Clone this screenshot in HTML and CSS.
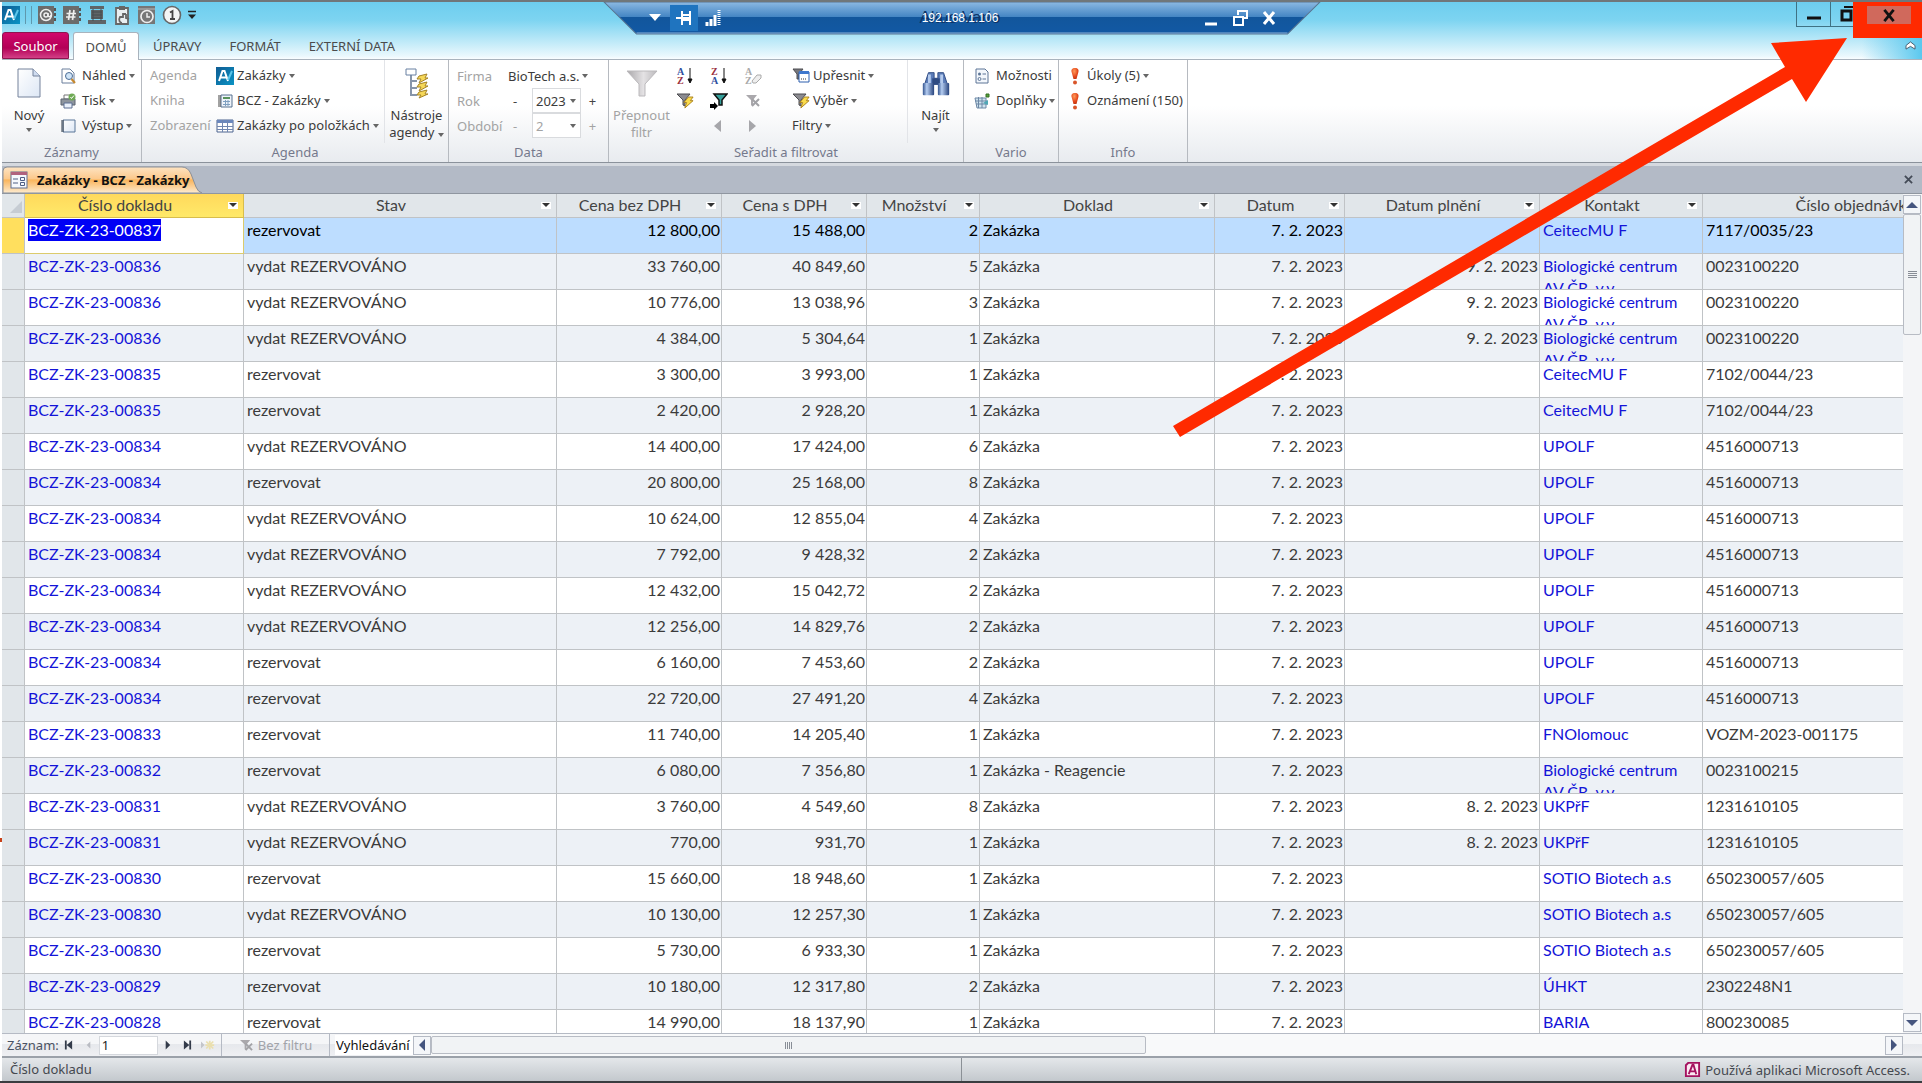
FILE: index.html
```html
<!DOCTYPE html>
<html lang="cs">

<head>
    <meta charset="UTF-8">
    <title>Altus Vario</title>
    <link rel="stylesheet" href="styles.css">
</head>

<body>

    <!-- shared icons -->
    <svg class="defs" aria-hidden="true">
        <defs>
            <linearGradient id="blueBox" x1="0" y1="0" x2="1" y2="1">
                <stop offset="0" stop-color="#0f5c93" />
                <stop offset="1" stop-color="#0a93c4" />
            </linearGradient>
            <linearGradient id="grayFunnel" x1="0" y1="0" x2="1" y2="0">
                <stop offset="0" stop-color="#a9a7aa" />
                <stop offset=".55" stop-color="#e4e2e4" />
                <stop offset="1" stop-color="#bbb9bc" />
            </linearGradient>
            <linearGradient id="bino" x1="0" y1="0" x2="1" y2="0">
                <stop offset="0" stop-color="#33548f" />
                <stop offset=".35" stop-color="#b5cdf1" />
                <stop offset="1" stop-color="#26427c" />
            </linearGradient>
            <linearGradient id="page" x1="0" y1="0" x2="1" y2="1">
                <stop offset="0" stop-color="#ffffff" />
                <stop offset="1" stop-color="#dde7f5" />
            </linearGradient>
            <radialGradient id="alert" cx=".4" cy=".3" r=".8">
                <stop offset="0" stop-color="#ff9a5a" />
                <stop offset=".6" stop-color="#e4471b" />
                <stop offset="1" stop-color="#b52f0c" />
            </radialGradient>
            <symbol id="bolt" viewBox="0 0 12 14">
                <path d="M6 1h5L8 5h3L2 13l2-6H1z" fill="#fbdc4c" stroke="#a8801a" stroke-width="1" />
            </symbol>
            <symbol id="av" viewBox="0 0 18 18">
                <rect width="18" height="18" fill="url(#blueBox)" />
                <path d="M3 14 6.500 4h2L12 14M4.500 10.500h6" fill="none" stroke="#fff" stroke-width="2" />
                <path d="M12 13 16 4" stroke="#5cc6ea" stroke-width="2" />
            </symbol>
            <symbol id="exclaim" viewBox="0 0 8 18">
                <path d="M4 1C1 1 0 3 .6 5L2.500 12h3l1.900-7C8 3 7 1 4 1z" fill="url(#alert)" />
                <circle cx="4" cy="15.500" r="2" fill="#d9552a" />
            </symbol>
            <symbol id="nofilter" viewBox="0 0 16 14">
                <path d="M1 1h11L8 6v6L6 11V6z" fill="#aaa8ac" />
                <path d="M7 5l7 7M14 5l-7 7" stroke="#a2a2a6" stroke-width="2" />
            </symbol>
        </defs>
    </svg>

    <header class="titlebar">
        <div class="quick">
            <svg class="logo" viewBox="0 0 18 18"><use href="#av" /></svg>
            <span class="sep"></span><span class="sep"></span>
            <button title="Kontakty"><svg viewBox="0 0 20 20"><rect x="1" y="1" width="16" height="18" fill="#6b6b6b" /><path d="M17 3h2v3h-2zM17 8h2v3h-2zM17 13h2v3h-2z" fill="#555" /><circle cx="9" cy="10" r="5.500" fill="none" stroke="#eee" stroke-width="1.500" /><circle cx="9" cy="10" r="2" fill="none" stroke="#eee" stroke-width="1.500" /><path d="M11 8v3q2 2 3-1" fill="none" stroke="#eee" stroke-width="1.500" /></svg></button>
            <button title="Čísla"><svg viewBox="0 0 20 20"><rect x="1" y="1" width="16" height="18" fill="#6b6b6b" /><path d="M17 3h2v3h-2zM17 8h2v3h-2zM17 13h2v3h-2z" fill="#555" /><path d="M8 5 6.500 15M12 5l-1.500 10M4.500 8.500H14M4 12h9.500" stroke="#eee" stroke-width="1.700" /></svg></button>
            <button title="Sklad"><svg viewBox="0 0 20 20"><path d="M3 1h14v3H3zM4 5h12v9H4zM1 15h18v4H1z" fill="#5f6467" /><path d="M5 7h10M5 10h10M5 13h10M6 4v12M14 4v12" stroke="#474c50" /></svg></button>
            <button title="Schránka"><svg viewBox="0 0 20 20"><path d="M4 3h12v16H4z" fill="#e9eef0" stroke="#666" stroke-width="1.800" /><path d="M7 1h6v4H7z" fill="#666" /><path d="M14 9h-3v3H8c-2 3 0 6 2 6M14 9v4l3 1" fill="none" stroke="#666" stroke-width="1.800" /></svg></button>
            <button title="Plán"><svg viewBox="0 0 20 20"><rect x="1" y="1" width="17" height="18" fill="#767676" /><path d="M1 4h17" stroke="#bbb" /><circle cx="10" cy="11.500" r="6" fill="#777" stroke="#eee" stroke-width="1.700" /><path d="M10 8v4h3" fill="none" stroke="#eee" stroke-width="1.500" /></svg></button>
            <button title="Jedna"><svg viewBox="0 0 20 20"><circle cx="10" cy="10" r="8.500" fill="#f3f5f5" stroke="#666" stroke-width="1.600" /><path d="M8 7.500 10.500 6v8M8 14h5" fill="none" stroke="#444" stroke-width="1.800" /></svg></button>
            <button class="more" title="Přizpůsobit"><svg viewBox="0 0 10 10"><path d="M1 1.500h8" stroke="#222" stroke-width="1.500" /><path d="M1 4.500h8L5 9z" fill="#222" /></svg></button>
        </div>

        <div class="window-buttons">
            <button title="Minimalizovat"><svg viewBox="0 0 16 16"><path d="M1 12h14" stroke="#111" stroke-width="3" /></svg></button>
            <button title="Obnovit"><svg viewBox="0 0 16 16"><path d="M2 5h9v9H2z" fill="none" stroke="#111" stroke-width="3" /><path d="M4 1h11v11" fill="none" stroke="#111" stroke-width="2" /></svg></button>
        </div>

        <div class="remote">
            <svg class="remote-shape" viewBox="0 0 686 34" preserveAspectRatio="none">
                <defs>
                    <linearGradient id="remoteBlue" x1="0" y1="0" x2="0" y2="1">
                        <stop offset="0" stop-color="#8cb9e2" />
                        <stop offset=".47" stop-color="#4385c3" />
                        <stop offset=".48" stop-color="#12569c" />
                        <stop offset="1" stop-color="#1259a4" />
                    </linearGradient>
                </defs>
                <path d="M1 0h684l-31 32H32z" fill="url(#remoteBlue)" stroke="#5a7590" />
                <path d="M32 31h622" stroke="#8db3d8" />
            </svg>
            <button title="Nabídka"><svg viewBox="0 0 20 20"><path d="M4 6h12l-6 7z" fill="#fff" /></svg></button>
            <button class="pin" title="Připnout"><svg viewBox="0 0 20 20"><path d="M2 10h6M8 3v14M16 3v14M8 7h8M8 12h8" fill="none" stroke="#fff" stroke-width="2" /><path d="M9 9h6v3H9z" fill="#fff" /></svg></button>
            <svg class="signal" viewBox="0 0 20 20"><path d="M4 14v4M8 11v7M12 7v11" stroke="#fff" stroke-width="3" /><path d="M16 2v16" stroke="#fff" stroke-width="3" stroke-dasharray="1 1" /></svg>
            <span class="address"><span class="ghost">Altus Vario</span><span>192.168.1.106</span></span>
            <button title="Minimalizovat relaci"><svg viewBox="0 0 20 20"><path d="M4 16h12" stroke="#fff" stroke-width="3" /></svg></button>
            <button title="Obnovit relaci"><svg viewBox="0 0 20 20"><path d="M8 7V3h9v7h-3" fill="none" stroke="#fff" stroke-width="2" /><path d="M4 9h9v8H4z" fill="none" stroke="#fff" stroke-width="2" /></svg></button>
            <button title="Zavřít relaci"><svg viewBox="0 0 20 20"><path d="M5 4l10 12M15 4 5 16" stroke="#fff" stroke-width="3" /></svg></button>
        </div>
    </header>

    <nav class="tabs">
        <button class="tab file">Soubor</button>
        <button class="tab active">DOMŮ</button>
        <button class="tab">ÚPRAVY</button>
        <button class="tab">FORMÁT</button>
        <button class="tab">EXTERNÍ DATA</button>
        <button class="collapse" title="Sbalit pás karet"><svg viewBox="0 0 12 10"><path d="M1 5l5-4 5 4v4L6 6 1 9z" fill="#fff" stroke="#456" /></svg></button>
    </nav>

    <section class="ribbon">
        <div class="group records">
            <div class="group-body">
                <button class="big">
                    <svg class="icon-big" viewBox="0 0 32 32"><path d="M5 2h15l7 7v21H5z" fill="url(#page)" stroke="#75829b" /><path d="M20 2v7h7" fill="#cfdcf0" stroke="#75829b" /></svg>
                    <span>Nový</span><i class="arrow"></i>
                </button>
                <div class="stack">
                    <button class="small"><svg viewBox="0 0 16 16"><path d="M2 1h8l4 4v10H2z" fill="#fff" stroke="#6b7f9c" /><circle cx="9" cy="8" r="3.500" fill="#cfe4f7" stroke="#4b6b94" /><path d="M11.500 11 15 15" stroke="#c6882d" stroke-width="2" /></svg>Náhled <i class="arrow"></i></button>
                    <button class="small"><svg viewBox="0 0 16 16"><path d="M4 2h8v4H4z" fill="#fff" stroke="#777" /><path d="M1 6h14v6H1z" fill="#8d949d" stroke="#5c6570" /><path d="M4 10h8v5H4z" fill="#e9f0fa" stroke="#5c6f92" /><circle cx="12" cy="4" r="3.500" fill="#6faa55" /><path d="M10.500 4l1 1.500L14 2.500" fill="none" stroke="#fff" /></svg>Tisk <i class="arrow"></i></button>
                    <button class="small"><svg viewBox="0 0 16 16"><path d="M3 2h12v12H3z" fill="url(#page)" stroke="#5b7698" /><path d="M1 3h3M1 5h3M1 7h3M1 9h3M1 11h3M1 13h3" stroke="#2f3a49" /></svg>Výstup <i class="arrow"></i></button>
                </div>
            </div>
            <div class="group-name">Záznamy</div>
        </div>

        <div class="group agenda">
            <div class="group-body">
                <div class="stack labels"><span>Agenda</span><span>Kniha</span><span>Zobrazení</span></div>
                <div class="stack wide-icons">
                    <button class="small"><svg class="av" viewBox="0 0 18 18"><use href="#av" /></svg>Zakázky <i class="arrow"></i></button>
                    <button class="small"><svg viewBox="0 0 16 16"><path d="M4 2h11v12H4z" fill="#eef3fa" stroke="#56718f" /><path d="M6 4h7v2H6z" fill="#58925c" /><path d="M6 8.500h7M6 11.500h7M8.500 7v6M11 7v6" stroke="#7e9fc0" /><path d="M1 3h3M1 5h3M1 7h3M1 9h3M1 11h3M1 13h3" stroke="#444" /></svg>BCZ - Zakázky <i class="arrow"></i></button>
                    <button class="small"><svg viewBox="0 0 16 16"><path d="M0 2h16v12H0z" fill="#fff" stroke="#4c648f" /><path d="M0 2h16v3H0z" fill="#6b88bd" /><path d="M0 8.500h16M0 11.500h16M5.500 2v12M10.500 2v12" stroke="#7187b0" /></svg>Zakázky po položkách <i class="arrow"></i></button>
                </div>
                <button class="big tools">
                    <svg class="icon-big" viewBox="0 0 32 32"><path d="M10 8v21M10 14h6M10 21h6M10 28h6" fill="none" stroke="#8795aa" stroke-width="2" /><path d="M5 2h10v6H5z" fill="#fff" stroke="#6980a2" /><path d="M18 9l8-2-2 4h3l-9 5 2-4h-4zM18 17l8-2-2 4h3l-9 5 2-4h-4zM18 25l8-2-2 4h3l-9 4 2-3h-4z" fill="#f6d858" stroke="#a68427" /></svg>
                    <span>Nástroje</span><span>agendy <i class="arrow"></i></span>
                </button>
            </div>
            <div class="group-name">Agenda</div>
        </div>

        <div class="group data">
            <div class="group-body">
                <div class="data-grid">
                    <span class="dim">Firma</span>
                    <button class="company">BioTech a.s. <i class="arrow"></i></button>
                    <label class="dim" for="year">Rok</label>
                    <button class="step minus">-</button>
                    <span class="pick"><select id="year"><option>2023</option></select><i class="arrow"></i></span>
                    <button class="step">+</button>
                    <label class="dim" for="period">Období</label>
                    <button class="step minus" disabled>-</button>
                    <span class="pick"><select id="period" disabled><option>2</option></select><i class="arrow"></i></span>
                    <button class="step" disabled>+</button>
                </div>
            </div>
            <div class="group-name">Data</div>
        </div>

        <div class="group sort">
            <div class="group-body">
                <button class="big dim">
                    <svg class="icon-big" viewBox="0 0 32 32"><path d="M1 4h30L19 17v12h-6V17z" fill="url(#grayFunnel)" stroke="#bbb9bc" /></svg>
                    <span>Přepnout</span><span>filtr</span>
                </button>
                <div class="sort-grid">
                    <button title="Vzestupně"><svg viewBox="0 0 18 18"><text x="1" y="8" class="letter blue">A</text><text x="1" y="17" class="letter red">Z</text><path d="M14 1v14M12 12l2 4 2-4z" fill="#111" stroke="#111" /></svg></button>
                    <button title="Sestupně"><svg viewBox="0 0 18 18"><text x="1" y="8" class="letter red">Z</text><text x="1" y="17" class="letter blue">A</text><path d="M14 1v14M12 12l2 4 2-4z" fill="#111" stroke="#111" /></svg></button>
                    <button title="Odebrat řazení" disabled><svg viewBox="0 0 18 18"><text x="1" y="8" class="letter gray">A</text><text x="1" y="17" class="letter gray">Z</text><path d="M8 14l5-6h4v3l-5 5H9z" fill="#eee" stroke="#aaa" /></svg></button>
                    <button title="Filtr podle výběru"><svg viewBox="0 0 18 18"><path d="M1 2h13L9 8v6l-2-1V8z" fill="#8b8b90" stroke="#4c4c50" /><use href="#bolt" x="7" y="4" width="11" height="13" /></svg></button>
                    <button title="Použít filtr"><svg viewBox="0 0 18 18"><path d="M4 2h13l-5 6v5H9V8z" fill="#35a09b" stroke="#111" stroke-width="1.500" /><path d="M0 12h4v-2l4 4-4 4v-2H0z" fill="#000" /></svg></button>
                    <button title="Zrušit filtr" disabled><svg viewBox="0 0 18 18"><use href="#nofilter" x="1" y="2" width="16" height="14" /></svg></button>
                    <span></span>
                    <button title="Předchozí" disabled><svg viewBox="0 0 18 18"><path d="M11 3v12L4 9z" fill="#a6a6aa" /></svg></button>
                    <button title="Další" disabled><svg viewBox="0 0 18 18"><path d="M5 3v12l7-6z" fill="#a6a6aa" /></svg></button>
                </div>
                <div class="stack filters">
                    <button class="small"><svg viewBox="0 0 18 16"><path d="M1 1h10L7 6v5H5V6z" fill="#77777c" stroke="#4c4c50" /><path d="M7 4h10v10H7z" fill="#fff" stroke="#2d5fae" /><path d="M7 3h10v3H7z" fill="#3f78cd" /><path d="M9 11h6" stroke="#333" stroke-dasharray="1 1" /></svg>Upřesnit <i class="arrow"></i></button>
                    <button class="small"><svg viewBox="0 0 18 16"><path d="M1 1h13L9 7v6l-2-1V7z" fill="#8b8b90" stroke="#4c4c50" /><use href="#bolt" x="7" y="3" width="11" height="13" /></svg>Výběr <i class="arrow"></i></button>
                    <button class="small">Filtry <i class="arrow"></i></button>
                </div>
                <button class="big find">
                    <svg class="icon-big" viewBox="-1 -1 34 34"><path d="M8 5h6v6h4V5h6l4 12H4z" fill="#5b7cb8" stroke="#2f4b82" /><path d="M12 11h8v7h-8z" fill="#2f4b82" /><rect x="2" y="16" width="12" height="13" rx="1" fill="url(#bino)" /><rect x="18" y="16" width="12" height="13" rx="1" fill="url(#bino)" /><path d="M9 7v9M22 7v9" stroke="#b5cbed" stroke-width="3" /></svg>
                    <span>Najít</span><i class="arrow"></i>
                </button>
            </div>
            <div class="group-name">Seřadit a filtrovat</div>
        </div>

        <div class="group vario">
            <div class="group-body">
                <div class="stack">
                    <button class="small"><svg viewBox="0 0 16 16"><path d="M2 1h9l3 3v11H2z" fill="#f3f7fc" stroke="#5d7596" /><circle cx="5.500" cy="6" r="1.500" fill="#5d7596" /><circle cx="5.500" cy="11" r="1.500" fill="none" stroke="#5d7596" /><path d="M8.500 6H12M8.500 11H12" stroke="#5d7596" /></svg>Možnosti</button>
                    <button class="small"><svg viewBox="0 0 16 16"><path d="M1 5h11v10H3z" fill="#cfe3ee" stroke="#6d87a5" /><path d="M1 8h12M2 11h11M4.500 4v11M8 4v11" stroke="#6d87a5" /><path d="M12 1h3v3h-3z" fill="#57a33c" stroke="#356f22" /><path d="M9 10l5-3v5z" fill="#4fa7b5" /></svg>Doplňky <i class="arrow"></i></button>
                </div>
            </div>
            <div class="group-name">Vario</div>
        </div>

        <div class="group info">
            <div class="group-body">
                <div class="stack">
                    <button class="small"><svg viewBox="0 0 8 18"><use href="#exclaim" /></svg>Úkoly (5) <i class="arrow"></i></button>
                    <button class="small"><svg viewBox="0 0 8 18"><use href="#exclaim" /></svg>Oznámení (150)</button>
                </div>
            </div>
            <div class="group-name">Info</div>
        </div>
    </section>

    <div class="doc-bar">
        <button class="doc-tab">
            <svg class="doc-shape" viewBox="0 0 200 27" preserveAspectRatio="none">
                <defs>
                    <linearGradient id="orange" x1="0" y1="0" x2="0" y2="1">
                        <stop offset="0" stop-color="#fde3c2" />
                        <stop offset=".45" stop-color="#fcc98c" />
                        <stop offset=".5" stop-color="#fab55c" />
                        <stop offset="1" stop-color="#fdebd0" />
                    </linearGradient>
                </defs>
                <path d="M1 27V5Q1 1 5 1H180Q186 1 189 8L194 21Q196 26 200 27z" fill="url(#orange)" stroke="#8b8f96" />
            </svg>
            <svg class="form-icon" viewBox="0 0 18 18"><rect x="1" y="1" width="16" height="16" fill="#f5f8fd" stroke="#5f6f91" /><path d="M1 1h16v3H1z" fill="#b0627e" /><path d="M3 8h5M3 12h5" stroke="#4e5f85" /><path d="M10.500 6.500h4v3h-4zM10.500 11.500h4v3h-4z" fill="none" stroke="#4e5f85" /></svg>
            <span>Zakázky - BCZ - Zakázky</span>
        </button>
        <button class="doc-close" title="Zavřít"><svg viewBox="0 0 10 10"><path d="M1 1l8 8M9 1 1 9" stroke="#444b57" stroke-width="2" /></svg></button>
    </div>

    <main class="sheet">
        <div class="grid-wrap">
            <table>
                <colgroup>
                    <col class="c-mark"><col class="c-number"><col class="c-state"><col class="c-net"><col class="c-gross"><col class="c-qty"><col class="c-doc"><col class="c-date"><col class="c-due"><col class="c-contact"><col class="c-order">
                </colgroup>
                <thead>
                    <tr id="heads"></tr>
                </thead>
                <tbody id="rows"></tbody>
            </table>
        </div>
        <div class="vscroll">
            <button title="Nahoru"><svg viewBox="0 0 12 12"><path d="M0 9h12L6 3z" fill="#45557f" /></svg></button>
            <div class="thumb"><i class="grip"></i></div>
            <button class="end" title="Dolů"><svg viewBox="0 0 12 12"><path d="M0 3h12L6 9z" fill="#45557f" /></svg></button>
        </div>
    </main>

    <div class="record-bar">
        <div class="pager">
            <label for="record">Záznam:</label>
            <button title="První"><svg viewBox="0 0 10 10"><path d="M2 0v10" stroke="#333b4a" stroke-width="2" /><path d="M9 0v10L3 5z" fill="#333b4a" /></svg></button>
            <button title="Předchozí záznam"><svg viewBox="0 0 10 10"><path d="M7 1v8L3 5z" fill="#b9bcc3" /></svg></button>
            <input id="record" type="text" value="1">
            <button title="Další záznam"><svg viewBox="0 0 10 10"><path d="M3 0v10l5-5z" fill="#333b4a" /></svg></button>
            <button title="Poslední"><svg viewBox="0 0 10 10"><path d="M8 0v10" stroke="#333b4a" stroke-width="2" /><path d="M1 0v10l6-5z" fill="#333b4a" /></svg></button>
            <button title="Nový záznam"><svg class="new-record" viewBox="0 0 16 10"><path d="M0 1v8l4-4z" fill="#c3c5ca" /><path d="M10 0v10M5 5h10M6 1l8 8M14 1 6 9" stroke="#eadfae" stroke-width="2" /></svg></button>
        </div>
        <div class="filter-state"><svg viewBox="0 0 16 14"><use href="#nofilter" /></svg>Bez filtru</div>
        <input class="search" type="text" value="Vyhledávání" aria-label="Vyhledávání">
        <div class="hscroll">
            <button title="Vlevo"><svg viewBox="0 0 12 12"><path d="M9 0v12L3 6z" fill="#45557f" /></svg></button>
            <div class="thumb"><i class="grip"></i></div>
            <button class="end" title="Vpravo"><svg viewBox="0 0 12 12"><path d="M3 0v12l6-6z" fill="#45557f" /></svg></button>
        </div>
    </div>

    <footer class="status">
        <span>Číslo dokladu</span>
        <span class="access"><svg viewBox="0 0 18 18"><path d="M4 1h13v16H1V4z" fill="#a4125f" /><path d="M5 3h10v12H3V5z" fill="#fbeaf3" /><path d="M5 14 9 4h1l3 10M6 11h6" fill="none" stroke="#a4125f" stroke-width="2" /></svg>Používá aplikaci Microsoft Access.</span>
    </footer>

    <!-- pointer to the close button -->
    <svg class="callout" viewBox="0 0 754 440" aria-hidden="true">
        <path d="M5 426 617 67 603 43 679 38 638 102 624 79 12 437z" fill="#ff2a00" />
    </svg>
    <div class="close-mark"><button title="Zavřít"><svg viewBox="0 0 14 14"><path d="M2 1l10 12M12 1 2 13" stroke="#111" stroke-width="3" /></svg></button></div>
    <i class="edge-mark"></i>

    <script src="script.js"></script>
</body>

</html>
```
FILE: styles.css
```css
* {
    box-sizing: border-box;
}

html,
body {
    height: 100%;
    margin: 0;
}

body {
    display: flex;
    flex-direction: column;
    position: relative;
    overflow: hidden;
    padding-left: 2px;
    border-top: 2px solid #70777a;
    border-bottom: 2px solid #3a3d40;
    background: linear-gradient(to right, #fff 2px, transparent 2px), linear-gradient(#6bcdee, #7dd4f1 20px, #eaf8fd 56px, #fff 60px);
    font-family: "Noto Sans", "Open Sans", sans-serif;
    font-size: 13px;
    color: #3b3b3b;
}

button,
input,
select {
    font: inherit;
    color: inherit;
}

button {
    display: flex;
    align-items: center;
    padding: 0;
    border: 0;
    background: none;
    white-space: nowrap;
}

svg {
    display: block;
    flex: none;
}

.defs {
    position: absolute;
    width: 0;
    height: 0;
}

.arrow {
    display: inline-block;
    flex: none;
    border: 3px solid transparent;
    border-top: 4px solid #666;
    border-bottom: 0;
}

/* title bar */
.titlebar {
    display: flex;
    flex: none;
    justify-content: space-between;
    height: 30px;
}

.quick {
    display: flex;
    align-items: center;
    gap: 5px;
    height: 26px;
}

.quick svg {
    width: 20px;
    height: 20px;
}

.quick .logo {
    width: 18px;
    height: 18px;
}

.quick .sep {
    width: 1px;
    height: 18px;
    background: #5f98ad;
}

.quick .more svg {
    width: 10px;
    height: 10px;
}

.window-buttons {
    display: flex;
    align-items: flex-start;
    margin-right: 58px;
}

.window-buttons button {
    justify-content: center;
    width: 34px;
    height: 25px;
    border: solid #3f7284;
    border-width: 0 0 1px 1px;
}

.window-buttons svg {
    width: 16px;
    height: 16px;
}

.remote {
    display: flex;
    align-items: center;
    gap: 5px;
    position: absolute;
    top: 0;
    left: 50%;
    width: 718px;
    height: 32px;
    margin-left: -358px;
    padding: 0 42px;
}

.remote-shape {
    position: absolute;
    inset: 0;
    width: 100%;
    height: 34px;
}

.remote button,
.remote .signal {
    position: relative;
    width: 20px;
    height: 26px;
}

.remote button svg {
    width: 20px;
    height: 20px;
}

.remote .pin {
    width: 28px;
    justify-content: center;
    background: #1f74bf;
}

.address ~ button {
    margin-left: 4px;
}

.address {
    display: grid;
    flex: 1;
    position: relative;
    justify-items: center;
    align-items: center;
    font: 12px "Liberation Sans", sans-serif;
    color: #fff;
}

.address span {
    grid-area: 1 / 1;
}

.address .ghost {
    font-size: 17px;
    color: #0d3468;
}

/* ribbon */
.tabs {
    display: flex;
    flex: none;
    align-items: flex-end;
    height: 28px;
    border-bottom: 1px solid #a9b3bd;
}

.tab {
    justify-content: center;
    height: 27px;
    padding: 0 14px;
    color: #4b4b4b;
}

.tab.file {
    width: 67px;
    margin-right: 4px;
    border: 1px solid #8e1450;
    border-radius: 3px 3px 0 0;
    background: linear-gradient(#d1086c, #b30056 60%, #d33f86);
    color: #fff;
}

.tab.active {
    width: 66px;
    height: 28px;
    margin-bottom: -1px;
    border: 1px solid #a9b3bd;
    border-bottom: 0;
    border-radius: 3px 3px 0 0;
    background: #fff;
}

.collapse {
    justify-content: flex-end;
    flex: 1;
    align-self: stretch;
    padding-right: 6px;
    background: linear-gradient(to left, #5bc8ee, transparent 60px);
}

.collapse svg {
    width: 11px;
    height: 9px;
}

.ribbon {
    display: flex;
    flex: none;
    height: 103px;
    border-bottom: 1px solid #8b929b;
    background: linear-gradient(#fff 45%, #e8ebef);
}

.group {
    display: flex;
    flex-direction: column;
    border-right: 1px solid #b6bac0;
}

.group-body {
    display: flex;
    height: 83px;
}

.group-name {
    text-align: center;
    line-height: 18px;
    color: #75798c;
}

.records {
    width: 140px;
}

.agenda {
    width: 307px;
}

.data {
    width: 160px;
}

.sort {
    width: 355px;
}

.vario {
    width: 95px;
}

.info {
    width: 129px;
}

.stack {
    display: flex;
    flex-direction: column;
    padding-top: 3px;
}

.stack > * {
    height: 25px;
    line-height: 25px;
}

.small {
    gap: 3px;
}

.small svg {
    width: 16px;
    height: 16px;
    margin-right: 3px;
}

.small .av {
    width: 18px;
    height: 18px;
}

.big {
    flex-direction: column;
    width: 54px;
    padding-top: 7px;
    line-height: 17px;
}

.icon-big {
    width: 32px;
    height: 32px;
    margin-bottom: 8px;
}

.big > .arrow {
    margin-top: 4px;
}

.records .stack {
    padding-left: 4px;
}

.labels,
.dim {
    color: #a3a3a3;
}

.labels {
    width: 74px;
    padding-left: 8px;
}

.wide-icons .small svg,
.filters .small svg {
    width: 18px;
    margin-right: 0;
}

.tools {
    margin-left: auto;
    width: 64px;
    border-left: 1px solid #e2e4e8;
}

.data-grid {
    display: grid;
    grid-template: repeat(3, 25px) / 51px 24px 49px 23px;
    align-items: center;
    padding: 3px 0 0 8px;
}

.company {
    grid-column: 2 / 5;
    gap: 3px;
}

.step {
    justify-content: center;
    color: #444;
}

.step:disabled {
    color: #a3a3a3;
}

.step.minus {
    justify-content: flex-start;
    padding-left: 5px;
}

.pick {
    display: flex;
    align-items: center;
    height: 25px;
    padding-right: 4px;
    border: 1px solid #d9dbde;
    background: #fff;
}

.pick select {
    flex: 1;
    width: 36px;
    padding: 0 0 0 3px;
    border: 0;
    background: none;
    appearance: none;
}

.pick select:disabled {
    opacity: 1;
    color: #a3a3a3;
}

.sort .big {
    width: 62px;
    padding-left: 3px;
}

.sort-grid {
    display: grid;
    grid-template: repeat(3, 25px) / repeat(3, 34px);
    align-items: center;
    padding-top: 3px;
}

.sort-grid button {
    padding-left: 5px;
}

.sort-grid svg {
    width: 18px;
    height: 18px;
}

.letter {
    font: bold 10px "Liberation Serif", serif;
}

.blue {
    fill: #2f4f9e;
}

.red {
    fill: #9b2f3e;
}

.gray {
    fill: #a9a9a9;
}

.filters {
    padding-left: 19px;
}

.sort .find {
    width: 56px;
    padding-left: 0;
    margin-left: auto;
    border-left: 1px solid #e2e4e8;
}

.vario .stack {
    padding-left: 10px;
}

.info .stack {
    padding-left: 12px;
}

.info .small svg {
    width: 8px;
    height: 18px;
    margin-right: 5px;
}

/* document tabs */
.doc-bar {
    display: flex;
    flex: none;
    align-items: flex-end;
    justify-content: space-between;
    height: 31px;
    padding-top: 3px;
    border-bottom: 1px solid #8f96a0;
    background: linear-gradient(#d5d9df 3px, #b3bac6 3px);
}

.doc-tab {
    position: relative;
    gap: 9px;
    width: 200px;
    height: 27px;
    padding-left: 8px;
    font-weight: bold;
    color: #111;
}

.doc-tab span,
.form-icon {
    position: relative;
}

.doc-shape {
    position: absolute;
    inset: 0;
    width: 100%;
    height: 100%;
}

.form-icon {
    width: 18px;
    height: 18px;
}

.doc-close {
    height: 27px;
    padding-right: 9px;
}

.doc-close svg {
    width: 9px;
    height: 9px;
}

/* datasheet */
.sheet {
    display: flex;
    flex: 1;
    min-height: 0;
}

.grid-wrap {
    flex: 1;
    min-width: 0;
    overflow: hidden;
}

table {
    width: 2024px;
    table-layout: fixed;
    border-spacing: 0;
    font-family: Lato, sans-serif;
    font-size: 16px;
    line-height: 22px;
}

.c-mark { width: 23px; }
.c-number { width: 219px; }
.c-state { width: 313px; }
.c-net { width: 165px; }
.c-gross { width: 145px; }
.c-qty { width: 113px; }
.c-doc { width: 235px; }
.c-date { width: 130px; }
.c-due { width: 195px; }
.c-contact { width: 163px; }
.c-order { width: 323px; }

th,
td {
    padding: 0;
    border: solid #c0c3c6;
    border-width: 0 1px 1px 0;
}

th {
    height: 24px;
    background: #e1e6ea;
    font-weight: normal;
    color: #444;
}

.head {
    display: flex;
    align-items: center;
    height: 23px;
    padding: 0 5px 1px 0;
}

.head span {
    flex: 1;
    padding-right: 3px;
    text-align: center;
}

.head button {
    justify-content: center;
    width: 10px;
    height: 7px;
    background: #fff;
}

.head .arrow {
    border-width: 4px 4px 0;
    border-top-color: #333;
}

.corner {
    width: 0;
    margin: 2px 0 0 8px;
    border: 6px solid transparent;
    border-right-color: #c6ccd3;
    border-bottom-color: #c6ccd3;
}

th.picked {
    background: linear-gradient(#ffd95c, #ffe969);
    border-color: #d8bd4c;
}

.cell {
    height: 35px;
    padding: 1px 1px 0 3px;
    overflow: hidden;
}

.num {
    text-align: right;
}

td a {
    color: #1414d8;
    text-decoration: none;
}

tbody tr:nth-child(even) {
    background: #edf1f6;
}

tbody tr:nth-child(odd) {
    background: #fff;
}

tbody td:first-child {
    background: #e1e6ea;
}

tbody tr.current {
    background: #bdddff;
    color: #000;
}

tbody .current td:first-child {
    background: #ffdf5e;
}

tbody .current td:nth-child(2) {
    background: #fff;
    border-color: #dccb6c;
}

.current td:nth-child(2) a {
    display: inline-block;
    background: #0000f5;
    color: #fff;
}

.vscroll {
    display: flex;
    flex-direction: column;
    width: 19px;
    padding: 1px 0;
    background: #f4f5f7;
}

.vscroll button,
.hscroll button {
    flex: none;
    justify-content: center;
    width: 18px;
    height: 19px;
    border: 1px solid #b5bac4;
    background: #f4f6f9;
}

.vscroll svg,
.hscroll svg {
    width: 12px;
    height: 12px;
}

.thumb {
    display: flex;
    align-items: center;
    justify-content: center;
    border: 1px solid #b8bcc4;
    border-radius: 2px;
    background: #f1f3f5;
}

.vscroll .thumb {
    width: 18px;
    height: 121px;
}

.vscroll .end {
    margin-top: auto;
}

.grip {
    width: 9px;
    height: 8px;
    background: repeating-linear-gradient(#888d96 0 1px, transparent 1px 2px);
}

/* record navigation */
.record-bar {
    display: flex;
    flex: none;
    height: 25px;
    padding-right: 19px;
    border-top: 1px solid #b5bac4;
    border-bottom: 2px solid #9ba1a9;
    background: linear-gradient(#f5f6f8 45%, #e6e8ec 46%, #eff0f3);
    color: #4a5263;
}

.pager {
    display: flex;
    align-items: center;
    width: 220px;
    padding-left: 5px;
    border-right: 1px solid #b5bac4;
}

.pager button {
    justify-content: center;
    width: 20px;
    height: 20px;
}

.pager svg {
    width: 9px;
    height: 10px;
}

.pager svg.new-record {
    width: 14px;
}

.pager input {
    width: 59px;
    height: 19px;
    padding: 0 2px;
    border: 1px solid #d5d8dd;
    background: #fff;
    color: #222;
}

.filter-state {
    display: flex;
    align-items: center;
    justify-content: center;
    gap: 4px;
    width: 108px;
    border-right: 1px solid #b5bac4;
    color: #a2a4aa;
}

.filter-state svg {
    width: 15px;
    height: 13px;
}

.search {
    width: 78px;
    height: 20px;
    margin: 1px 0 0 5px;
    padding: 0 1px;
    border: 0;
    background: #fff;
    color: #111;
}

.hscroll {
    display: flex;
    flex: 1;
    align-items: center;
    background: #f8f9fa;
}

.hscroll .thumb {
    width: 48%;
    height: 18px;
}

.hscroll .end {
    margin-left: auto;
}

.hscroll .grip {
    width: 8px;
    height: 7px;
    background: repeating-linear-gradient(to right, #888d96 0 1px, transparent 1px 2px);
}

/* status bar */
.status {
    display: grid;
    flex: none;
    grid-template-columns: 1fr 1fr;
    height: 23px;
    background: linear-gradient(#e4e7ea, #c3c8cd);
    line-height: 22px;
    color: #44484f;
}

.status span:first-child {
    padding-left: 8px;
    border-right: 1px solid #8b9096;
}

.access {
    display: flex;
    align-items: center;
    justify-content: flex-end;
    gap: 4px;
    padding-right: 12px;
}

.access svg {
    width: 17px;
    height: 17px;
}

/* callout over the window */
.callout {
    position: absolute;
    top: -2px;
    right: 0;
    width: 754px;
    height: 440px;
    pointer-events: none;
}

.close-mark {
    position: absolute;
    top: -2px;
    right: 0;
    width: 69px;
    height: 38px;
    padding: 6px 11px 14px 14px;
    background: #ff2a00;
}

.close-mark button {
    justify-content: center;
    width: 44px;
    height: 18px;
    background: #d0695c;
}

.close-mark svg {
    width: 14px;
    height: 13px;
}

.edge-mark {
    position: absolute;
    left: 0;
    top: 836px;
    width: 2px;
    height: 4px;
    background: #c8421a;
}
```
FILE: script.js
```javascript
const heads = ['Číslo dokladu', 'Stav', 'Cena bez DPH', 'Cena s DPH', 'Množství', 'Doklad', 'Datum', 'Datum plnění', 'Kontakt', 'Číslo objednávky'];

const R = 'rezervovat';
const V = 'vydat REZERVOVÁNO';
const BC = 'Biologické centrum AV ČR, v.v.';

// number, state, net, gross, quantity, due date, contact, order, document
const orders = [
    ['837', R, '12 800,00', '15 488,00', 2, '', 'CeitecMU F', '7117/0035/23'],
    ['836', V, '33 760,00', '40 849,60', 5, '9. 2. 2023', BC, '0023100220'],
    ['836', V, '10 776,00', '13 038,96', 3, '9. 2. 2023', BC, '0023100220'],
    ['836', V, '4 384,00', '5 304,64', 1, '9. 2. 2023', BC, '0023100220'],
    ['835', R, '3 300,00', '3 993,00', 1, '', 'CeitecMU F', '7102/0044/23'],
    ['835', R, '2 420,00', '2 928,20', 1, '', 'CeitecMU F', '7102/0044/23'],
    ['834', V, '14 400,00', '17 424,00', 6, '', 'UPOLF', '4516000713'],
    ['834', R, '20 800,00', '25 168,00', 8, '', 'UPOLF', '4516000713'],
    ['834', V, '10 624,00', '12 855,04', 4, '', 'UPOLF', '4516000713'],
    ['834', V, '7 792,00', '9 428,32', 2, '', 'UPOLF', '4516000713'],
    ['834', V, '12 432,00', '15 042,72', 2, '', 'UPOLF', '4516000713'],
    ['834', V, '12 256,00', '14 829,76', 2, '', 'UPOLF', '4516000713'],
    ['834', R, '6 160,00', '7 453,60', 2, '', 'UPOLF', '4516000713'],
    ['834', R, '22 720,00', '27 491,20', 4, '', 'UPOLF', '4516000713'],
    ['833', R, '11 740,00', '14 205,40', 1, '', 'FNOlomouc', 'VOZM-2023-001175'],
    ['832', R, '6 080,00', '7 356,80', 1, '', BC, '0023100215', 'Zakázka - Reagencie'],
    ['831', V, '3 760,00', '4 549,60', 8, '8. 2. 2023', 'UKPřF', '1231610105'],
    ['831', V, '770,00', '931,70', 1, '8. 2. 2023', 'UKPřF', '1231610105'],
    ['830', R, '15 660,00', '18 948,60', 1, '', 'SOTIO Biotech a.s', '650230057/605'],
    ['830', V, '10 130,00', '12 257,30', 1, '', 'SOTIO Biotech a.s', '650230057/605'],
    ['830', R, '5 730,00', '6 933,30', 1, '', 'SOTIO Biotech a.s', '650230057/605'],
    ['829', R, '10 180,00', '12 317,80', 2, '', 'ÚHKT', '2302248N1'],
    ['828', R, '14 990,00', '18 137,90', 1, '', 'BARIA', '800230085']
];

document.getElementById('heads').innerHTML = '<th><div class="corner"></div></th>' + heads.map((h, i) =>
    `<th class="${i === 0 ? 'picked' : ''}"><div class="head"><span>${h}</span><button title="Filtr: ${h}"><i class="arrow"></i></button></div></th>`
).join('');

function cell(text, cls = '') {
    return `<td><div class="cell ${cls}">${text}</div></td>`;
}

function link(text) {
    return `<a href="#">${text}</a>`;
}

document.getElementById('rows').innerHTML = orders.map(([no, state, net, gross, qty, due, contact, order, doc = 'Zakázka'], i) =>
    `<tr class="${i === 0 ? 'current' : ''}">` +
    cell('') + cell(link('BCZ-ZK-23-00' + no)) + cell(state) +
    cell(net, 'num') + cell(gross, 'num') + cell(qty, 'num') + cell(doc) +
    cell('7. 2. 2023', 'num') + cell(due, 'num') + cell(link(contact)) + cell(order) +
    '</tr>'
).join('');
```
